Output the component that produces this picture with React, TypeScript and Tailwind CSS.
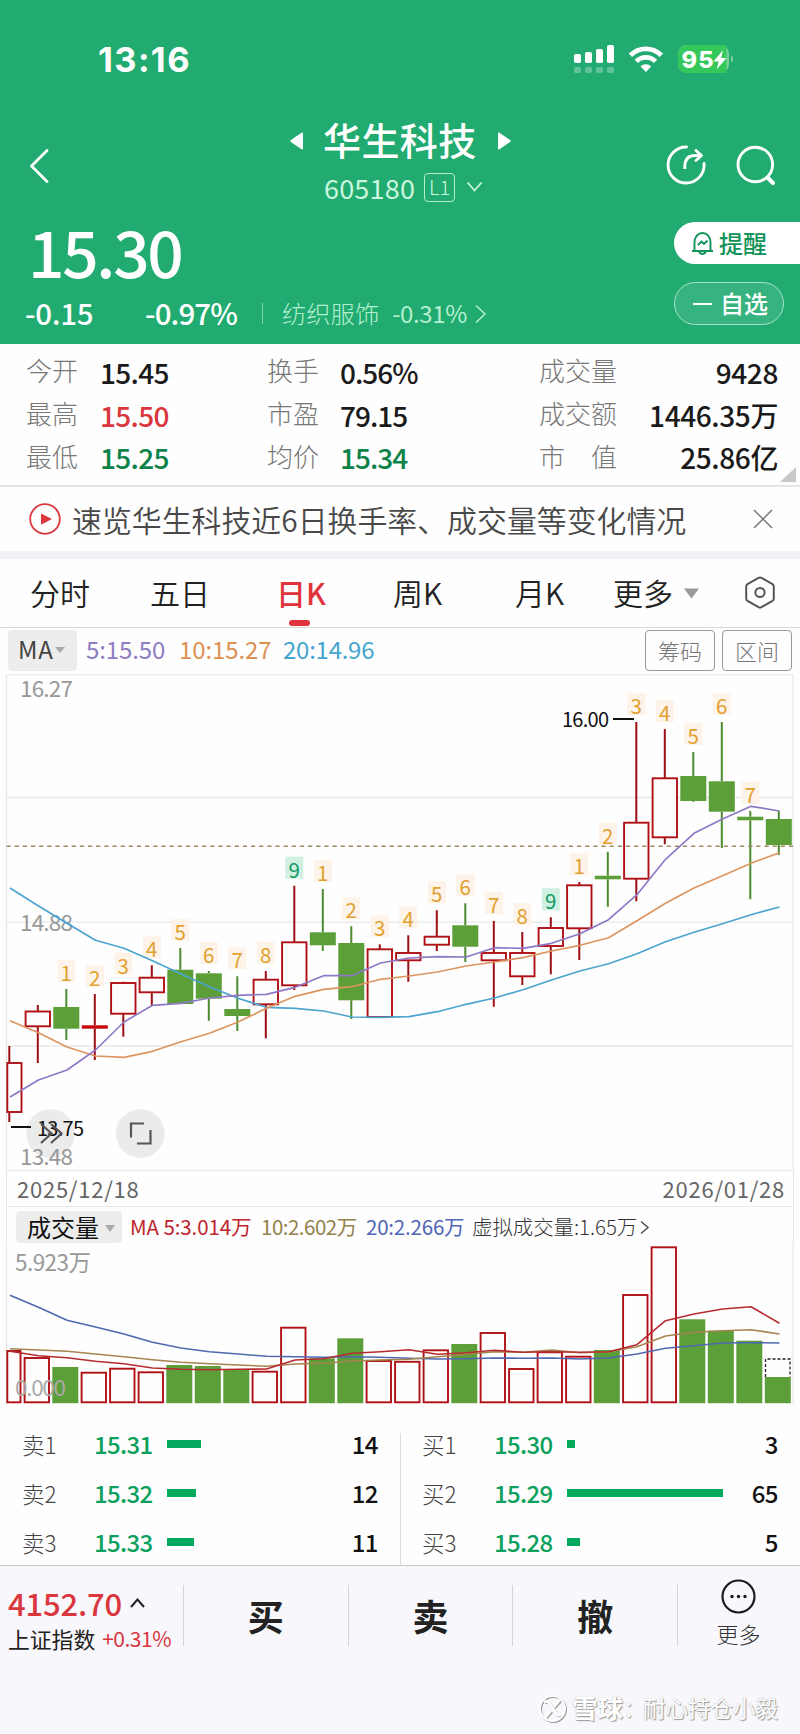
import React from "react";

type Candle = { o: number; c: number; h: number; l: number; up: boolean; tag?: string };

const STEP = 28.5;
const PRICE_TOP = 674;
const VOL_TOP = 1244;

// Body top, body bottom, wick top, wick bottom, rising flag, sequence mark
const rows: [number, number, number, number, number, string][] = [
  [1063, 1112, 1046, 1122, 1, ""],
  [1011.5, 1026.3, 1005, 1063, 1, ""],
  [1007, 1028.7, 989, 1040, 0, "1"],
  [1025.3, 1028.7, 994, 1060, 1, "2"],
  [983, 1013.7, 981.7, 1036.7, 1, "3"],
  [977.7, 992.3, 965.3, 1005.7, 1, "4"],
  [969.7, 1004, 948, 1004, 0, "5"],
  [973.3, 998.7, 971, 1020.7, 0, "6"],
  [1009, 1016, 976.3, 1031, 0, "7"],
  [979.7, 1004.3, 971, 1038.3, 1, "8"],
  [942.3, 985.3, 885.7, 990, 1, "9"],
  [932.3, 945.3, 889, 951, 0, "1"],
  [943, 1000.3, 926.3, 1019, 0, "2"],
  [949.3, 1017, 944.3, 1017, 1, "3"],
  [953, 960.3, 935.3, 981.7, 1, "4"],
  [936.7, 944.7, 910.3, 951, 1, "5"],
  [925.3, 946.7, 903.3, 962, 0, "6"],
  [953, 960.3, 921, 1006.7, 1, "7"],
  [953, 976.3, 932, 985, 1, "8"],
  [928, 946, 917.3, 974.3, 1, "9"],
  [885.3, 928.3, 882, 960, 1, "1"],
  [875.7, 879.3, 851.7, 906.7, 0, "2"],
  [822.7, 878.7, 722, 901.3, 1, "3"],
  [778.3, 837.3, 729, 844.3, 1, "4"],
  [776, 801, 752, 801.7, 0, "5"],
  [781.3, 811.7, 722, 848, 0, "6"],
  [816.7, 820.3, 811, 899.3, 0, "7"],
  [819, 845, 811, 855, 0, ""],
];
const candles: Candle[] = rows.map(([o, c, h, l, up, tag]) => ({ o, c, h, l, up: up === 1, tag }));

const ma5 = [1097, 1080, 1070, 1050, 1022, 1005.3, 1003.3, 998, 995.3, 994.3, 987.3, 975.7, 975.7, 963, 958, 956.7, 957, 947.7, 948.3, 943.3, 933.7, 919.7, 894.7, 859.3, 833.3, 819, 806.3, 811];
const ma10 = [1020.7, 1032.7, 1047, 1056, 1057.3, 1051.3, 1041.7, 1033.3, 1022, 1008.3, 996.3, 989.3, 986.7, 979.3, 976, 972, 966, 962, 957.7, 951, 945.3, 937.7, 920.7, 903.3, 888, 875.7, 863.3, 852.7];
const ma20 = [888, 906, 923.3, 940.3, 948.3, 960.7, 974, 986.7, 998.3, 1007.3, 1008.3, 1011, 1017, 1017.3, 1016.7, 1011.7, 1004.3, 998, 989.7, 980, 971, 963.7, 953.7, 941.7, 932.3, 923.7, 914.7, 907];

// Top of each volume bar
const volTops = [1351, 1358, 1367, 1372.7, 1368.7, 1372.3, 1365, 1366, 1369.7, 1371.7, 1327.7, 1358.3, 1338.3, 1361, 1361.8, 1350.3, 1344, 1333, 1369, 1352.3, 1356.7, 1350, 1295, 1247.3, 1319.3, 1330.7, 1340.7, 1377];
const v5 = [1351.3, 1355.7, 1357.7, 1361.3, 1363.7, 1368, 1369.3, 1369.7, 1369.3, 1369, 1360, 1358.7, 1353.3, 1351.7, 1349.7, 1354.3, 1352.7, 1350.3, 1352.3, 1351.7, 1352.3, 1351.7, 1344.7, 1320.7, 1314, 1309, 1306.7, 1323.3];
const v10 = [1348.7, 1350, 1351.3, 1354, 1356.7, 1359.7, 1362.3, 1363.7, 1365, 1366.3, 1364, 1363.3, 1361, 1360, 1359.3, 1356.7, 1354.3, 1351.7, 1352.3, 1350, 1352.7, 1351.7, 1346.7, 1336, 1332.3, 1330.7, 1329.7, 1334];
const v20 = [1295.3, 1307.3, 1320.3, 1327, 1334, 1342.3, 1348, 1351.7, 1354, 1356.3, 1356.7, 1357.3, 1356.7, 1357.3, 1358.3, 1359, 1358.7, 1358, 1358.3, 1358, 1359, 1358, 1354, 1348.3, 1345.7, 1343, 1342.7, 1343];

const line = (ys: number[]) => ys.map((y, i) => `${(10 + STEP * i).toFixed(1)},${y}`).join(" ");

function Header() {
  return (
    <header className="h-[344px] bg-[#21ab70] text-white">
      <div className="flex h-[118px] items-center pl-[98px] pr-[66px]">
        <span className="pt-[2px] font-['Inter'] text-[34.5px] font-bold leading-none tracking-[1.4px]">13:16</span>
        <svg className="ml-auto" width="161" height="30" viewBox="573 44 161 30">
          <g fill="#fff">
            <rect x="574" y="54" width="7" height="9" rx="1.8" />
            <rect x="585" y="52" width="7" height="11" rx="1.8" />
            <rect x="596" y="49" width="7" height="14" rx="1.8" />
            <rect x="607" y="45" width="7" height="18" rx="1.8" />
          </g>
          <g fill="#fff" opacity="0.28">
            <rect x="574" y="67" width="7" height="6" rx="1.8" />
            <rect x="585" y="67" width="7" height="6" rx="1.8" />
            <rect x="596" y="67" width="7" height="6" rx="1.8" />
            <rect x="607" y="67" width="7" height="6" rx="1.8" />
          </g>
          <g fill="none" stroke="#fff" strokeWidth="4.8">
            <path d="M630.4 55.2a22 22 0 0 1 31 0" />
            <path d="M636.3 61.4a13.6 13.6 0 0 1 19.2 0" />
          </g>
          <path d="M645.9 72l-5.300-5.600a7.600 7.600 0 0 1 10.600 0z" fill="#fff" />
          <rect x="678" y="45" width="51" height="28" rx="8.5" fill="#7bd09a" />
          <path d="M686.500 45h40v28h-40a8.500 8.500 0 0 1-8.500-8.500v-11a8.500 8.500 0 0 1 8.500-8.500z" fill="#34c759" />
          <path d="M731 55.500c3 1 3 6 0 7z" fill="#7bd09a" />
          <text x="681.5" y="68" fontFamily="Inter" fontWeight="800" fontSize="23.5" textLength="32" fill="#fff">95</text>
          <path d="M723 50l-9.500 11.500h5.200l-2 8L726.500 58h-5.300z" fill="#fff" />
        </svg>
      </div>

      <div className="flex h-[98px] items-center">
        <svg className="mb-[3px] ml-[29px]" width="20" height="34" viewBox="0 0 20 34">
          <path d="M18 1.500L2.500 17L18 32.500" fill="none" stroke="#fff" strokeWidth="2.8" strokeLinecap="round" strokeLinejoin="round" />
        </svg>
        <div className="ml-[241px] w-[222px]">
          <div className="flex h-[40px] items-center">
            <svg className="mt-[5px] shrink-0" width="13" height="18" viewBox="0 0 13 18">
              <path d="M11.500 0.800Q13 0 13 1.500V16.500Q13 18 11.500 17.200L0.600 9.800Q0 9 .6 8.200z" fill="#fff" />
            </svg>
            <h1 className="ml-[20px] whitespace-nowrap pt-[2px] text-[38px] font-medium leading-none tracking-[0.4px]">华生科技</h1>
            <svg className="ml-[21px] mt-[5px] shrink-0" width="13" height="18" viewBox="0 0 13 18">
              <path d="M1.500 0.800Q0 0 0 1.500V16.500Q0 18 1.500 17.200L12.400 9.800Q13 9 12.400 8.200z" fill="#fff" />
            </svg>
          </div>
          <div className="flex h-[58px] items-center pl-[34px] text-[#ccf7df]">
            <span className="text-[27px] leading-none tracking-[0.2px]">605180</span>
            <span className="ml-[9px] flex h-[29px] w-[31px] items-center justify-center rounded-[4px] border border-[#b5ecd0] pb-px text-[20px] font-light leading-none">L1</span>
            <svg className="ml-[11px]" width="17" height="12" viewBox="0 0 17 12">
              <path d="M1.500 1.500L8.500 9.500L15.500 1.500" fill="none" stroke="#ccf7df" strokeWidth="1.8" />
            </svg>
          </div>
        </div>
        <div className="mb-[4px] ml-auto flex items-center gap-[30px] pr-[25px]">
          <svg width="40" height="40" viewBox="0 0 40 40" fill="none" stroke="#fff" strokeWidth="2.9">
            <path d="M20.500 2A18 18 0 1 0 38 18.500" strokeLinecap="round" />
            <path d="M18.800 24V20.500Q19.500 10.500 29 10.500H34" />
            <path d="M30 5.500L35.500 10.500L30 15.500" strokeLinecap="round" strokeLinejoin="round" />
          </svg>
          <svg width="39" height="40" viewBox="0 0 39 40" fill="none" stroke="#fff" strokeWidth="2.9">
            <circle cx="19.3" cy="19.5" r="17.3" />
            <path d="M31.500 32.500L37 38" strokeWidth="4" strokeLinecap="round" />
          </svg>
        </div>
      </div>

      <div className="flex h-[128px] justify-between">
        <div>
          <div className="flex h-[68px] items-center pl-[28px] text-[64px] font-medium leading-none tracking-[-2.3px]">15.30</div>
          <div className="flex h-[58px] items-center pl-[25px] leading-none">
            <span className="w-[120px] text-[29.5px] font-medium tracking-[-0.3px]">-0.15</span>
            <span className="w-[117px] text-[29.5px] font-medium tracking-[-0.9px]">-0.97%</span>
            <span className="h-[21px] w-px bg-[#7fd6ac]" />
            <span className="ml-[19px] text-[24.3px] font-light text-[#b4f0d0]">纺织服饰</span>
            <span className="ml-[13px] text-[24px] tracking-[-0.4px] text-[#b4f0d0]">-0.31%</span>
            <svg className="ml-[8px] mt-[1px]" width="12" height="20" viewBox="0 0 12 20">
              <path d="M1 1.500L10 10L1 18.500" fill="none" stroke="#b4f0d0" strokeWidth="1.5" />
            </svg>
          </div>
        </div>
        <div className="flex w-[126px] flex-col gap-[18px] pt-[6px]">
          <div className="flex h-[42px] w-[126px] items-center rounded-l-full bg-white pl-[17px] text-[#12935a]">
            <svg width="23" height="25" viewBox="0 0 23 25" fill="none" stroke="#12935a" strokeWidth="1.9">
              <path d="M1 20H22M3.500 20V11a8 9 0 0 1 16 0v9M8 21q3.500 4 7 0" />
              <path d="M7 14l3.500-3.500 2.500 2.500 3.500-3.500" />
            </svg>
            <span className="ml-[5px] pb-[1px] text-[24px] font-medium leading-none">提醒</span>
          </div>
          <div className="flex h-[43px] w-[110px] items-center rounded-full border border-[#a5e6c6] bg-[#37b37f] pl-[18px]">
            <span className="h-[2px] w-[19px] bg-white" />
            <span className="ml-[8px] pb-[2px] text-[24px] font-medium leading-none">自选</span>
          </div>
        </div>
      </div>
    </header>
  );
}

const stats: { a: string; av: string; ac: string; b: string; bv: string; bc: string; c: string; cv: string }[] = [
  { a: "今开", av: "15.45", ac: "text-[#1a1a1a]", b: "换手", bv: "0.56%", bc: "text-[#1a1a1a]", c: "成交量", cv: "9428" },
  { a: "最高", av: "15.50", ac: "text-[#d9363e]", b: "市盈", bv: "79.15", bc: "text-[#1a1a1a]", c: "成交额", cv: "1446.35万" },
  { a: "最低", av: "15.25", ac: "text-[#0c8348]", b: "均价", bv: "15.34", bc: "text-[#0c8348]", c: "市　值", cv: "25.86亿" },
];

function Stats() {
  return (
    <section className="relative h-[143px] border-b-2 border-[#e6e6ea] pt-[5px] leading-none">
      {stats.map((s) => (
        <div key={s.a} className="flex h-[42.7px] items-center pl-[26px] pr-[22px]">
          <span className="w-[74px] text-[26px] font-light text-[#777]">{s.a}</span>
          <span className={`w-[167px] pt-[3px] text-[28px] font-medium tracking-[-0.7px] ${s.ac}`}>{s.av}</span>
          <span className="w-[73px] text-[26px] font-light text-[#777]">{s.b}</span>
          <span className={`w-[199px] pt-[3px] text-[28px] font-medium tracking-[-1px] ${s.bc}`}>{s.bv}</span>
          <span className="whitespace-nowrap text-[26px] font-light text-[#777]">{s.c}</span>
          <span className="ml-auto pt-[3px] text-[28px] font-medium tracking-[-0.4px] text-[#1a1a1a]">{s.cv}</span>
        </div>
      ))}
      <svg className="absolute bottom-[3px] right-[4px]" width="16" height="15" viewBox="0 0 16 15">
        <path d="M16 0V15H0z" fill="#c8c8c8" />
      </svg>
    </section>
  );
}

function News() {
  return (
    <section className="flex h-[64px] items-center pl-[29px] pr-[27px]">
      <svg width="32" height="32" viewBox="0 0 32 32">
        <circle cx="16" cy="16" r="14.8" fill="none" stroke="#d9363e" strokeWidth="1.8" />
        <path d="M12 10.500L23 16L12 21.800z" fill="#d9363e" />
      </svg>
      <span className="ml-[11px] pt-[1px] text-[29.9px] font-[350] leading-none text-[#484848]">速览华生科技近6日换手率、成交量等变化情况</span>
      <svg className="ml-auto" width="20" height="20" viewBox="0 0 20 20">
        <path d="M1 1L19 19M19 1L1 19" stroke="#777" strokeWidth="1.5" />
      </svg>
    </section>
  );
}

function Tabs() {
  return (
    <nav className="flex h-[69px] items-center border-b border-[#d9d9dc] text-[30px] font-[350] leading-none text-[#222]">
      <span className="mb-[2px] ml-[30px] w-[120px]">分时</span>
      <span className="mb-[2px] w-[126px]">五日</span>
      <span className="relative mb-[2px] w-[117px] font-medium text-[#e0333d]">
        日K
        <span className="absolute left-[13px] top-[43px] h-[6px] w-[21px] rounded-full bg-[#e0333d]" />
      </span>
      <span className="mb-[2px] w-[122px]">周K</span>
      <span className="mb-[2px] w-[98px]">月K</span>
      <span className="mb-[2px]">更多</span>
      <svg className="ml-[11px]" width="15" height="11" viewBox="0 0 15 11">
        <path d="M0 .5H15L7.500 10.500z" fill="#999" />
      </svg>
      <svg className="ml-[45px] mt-[-2px]" width="32" height="33" viewBox="0 0 32 33" fill="none" stroke="#555" strokeWidth="2">
        <path d="M14.500 1.900Q16 1.100 17.500 1.900L28.500 8.100Q29.800 9 29.800 10.500V22.500Q29.800 24 28.500 24.900L17.500 31.100Q16 31.900 14.500 31.100L3.500 24.900Q2.200 24 2.200 22.500V10.500Q2.200 9 3.500 8.100z" />
        <circle cx="16" cy="16.5" r="4.6" />
      </svg>
    </nav>
  );
}

function MaRow() {
  return (
    <div className="flex h-[46px] items-start px-[8px] pt-[2px] leading-none">
      <div className="flex h-[41px] w-[69px] items-center rounded-[4px] bg-[#ededed] pl-[10px] text-[24px] text-[#444]">
        <span className="mb-[3px] tracking-[0.8px]">MA</span>
        <svg className="ml-[1px] mb-[2px]" width="10" height="6" viewBox="0 0 10 6">
          <path d="M0 0H10L5 6z" fill="#aaa" />
        </svg>
      </div>
      <div className="flex h-[38px] items-center text-[24px] tracking-[-0.1px]">
        <span className="ml-[9px] w-[93px] text-[#8f7cc4]">5:15.50</span>
        <span className="w-[104px] text-[#dc9152]">10:15.27</span>
        <span className="tracking-[-0.25px] text-[#44a5cf]">20:14.96</span>
      </div>
      <div className="ml-auto flex gap-[7px] text-[22px] font-light text-[#777]">
        <span className="flex h-[41px] w-[70px] items-center justify-center rounded-[4px] border border-[#999] pb-[2px]">筹码</span>
        <span className="flex h-[41px] w-[70px] items-center justify-center rounded-[4px] border border-[#999] pb-[2px]">区间</span>
      </div>
    </div>
  );
}

const RED = "#b01015";
const GREEN = "#5c9f38";

function PriceChart() {
  return (
    <svg className="block" width="800" height="497" viewBox={`0 ${PRICE_TOP} 800 497`} fontFamily="'Noto Sans CJK SC', sans-serif">
      <g stroke="#e8e8e8" strokeWidth="1.3">
        <path d="M6.500 674.500H793M6.500 797.500H793M6.500 922.200H793M6.500 1046H793M6.500 1170.500H793" />
        <path d="M6.500 674V1171M793 674V1171" />
      </g>
      <g fill="#ebebeb">
        <circle cx="50.5" cy="1133.500" r="24.300" />
        <circle cx="140.3" cy="1133.500" r="24.300" />
      </g>
      <g fontSize="22.5" fill="#999">
        <text x="20" y="697" textLength="53">16.27</text>
        <text x="20" y="931" textLength="53">14.88</text>
        <text x="20" y="1165" textLength="53">13.48</text>
      </g>
      {candles.map((k, i) => {
        if (!k.tag) return null;
        const x = 9.3 + STEP * i;
        const nine = k.tag === "9";
        return (
          <g key={i}>
            <rect x={x - 9} y={k.h - 29} width="18" height="22" fill={nine ? "#d0f0e2" : "#fdf3e9"} />
            <text x={x} y={k.h - 8} textAnchor="middle" fontSize="20.5" fill={nine ? "#149a62" : "#e2a12f"}>{k.tag}</text>
          </g>
        );
      })}
      {candles.map((k, i) => {
        const x = 9.3 + STEP * i;
        const color = k.up ? RED : GREEN;
        const left = i === 0 ? 6.5 : x - 13;
        const thin = k.c - k.o < 5;
        return (
          <g key={i}>
            <path d={`M${x} ${k.h}V${k.o}M${x} ${k.c}V${k.l}`} stroke={k.up ? "#9c1014" : "#4d8a30"} strokeWidth="2" />
            {k.up && !thin ? (
              <rect x={left + 0.8} y={k.o} width={x + 13 - left - 1.6} height={k.c - k.o} fill="#fdfdfd" stroke={color} strokeWidth="1.9" />
            ) : (
              <rect x={left} y={k.o} width={x + 13 - left} height={k.c - k.o} fill={k.up ? "#c8060c" : color} />
            )}
          </g>
        );
      })}
      <path d="M6.500 846.300H793" stroke="#9c8c60" strokeWidth="1.5" strokeDasharray="4.2 3.95" />
      <g fill="none" strokeWidth="1.7" strokeLinejoin="round">
        <polyline points={line(ma20)} stroke="#4ba3cf" />
        <polyline points={line(ma10)} stroke="#dd9560" />
        <polyline points={line(ma5)} stroke="#8f79c6" />
      </g>
      <path d="M11 1127H31M613 719H634" stroke="#111" strokeWidth="1.8" />
      <g fontSize="20" fill="#111">
        <text x="37" y="1135.500" textLength="47">13.75</text>
        <text x="562" y="726.500" textLength="47">16.00</text>
      </g>
      <g fill="none" stroke="#555" strokeWidth="2.2">
        <path d="M41 1124l10.500 9.500L41 1143M51 1124l10.500 9.500L51 1143" />
        <path d="M144 1123.500H131V1137.500M150.500 1130V1143.500H137" />
      </g>
    </svg>
  );
}

function VolumeChart() {
  return (
    <svg className="block" width="800" height="160" viewBox={`0 ${VOL_TOP} 800 160`} fontFamily="'Noto Sans CJK SC', sans-serif">
      <path d="M6.500 1244V1404M793 1244V1404" stroke="#e8e8e8" strokeWidth="1.3" />
      {candles.map((k, i) => {
        const x = 8.3 + STEP * i;
        const left = i === 0 ? 6.5 : x - 13;
        const top = volTops[i];
        return k.up ? (
          <rect key={i} x={left + 0.8} y={top} width={x + 13 - left - 1.6} height={1402.3 - top} fill="none" stroke={RED} strokeWidth="1.9" />
        ) : (
          <rect key={i} x={left} y={top} width={26} height={1403.2 - top} fill={GREEN} />
        );
      })}
      <path d="M765.500 1377V1359H790V1377" fill="none" stroke="#222" strokeWidth="1.3" strokeDasharray="3 2" />
      <g fontSize="22.5" fill="#999">
        <text x="15" y="1271.300" textLength="76">5.923万</text>
        <text x="15" y="1396.300" textLength="51" fill="#aaa">0.000</text>
      </g>
      <g fill="none" strokeWidth="1.6" strokeLinejoin="round">
        <polyline points={line(v20)} stroke="#5068b0" />
        <polyline points={line(v10)} stroke="#a58450" />
        <polyline points={line(v5)} stroke="#b52c30" />
      </g>
    </svg>
  );
}

function Volume() {
  return (
    <section>
      <div className="mx-[6px] flex h-[36px] items-center justify-between border-x border-b border-[#e8e8e8] pb-[1px] pl-[10px] pr-[8px] text-[22px] leading-none tracking-[0.75px] text-[#666]">
        <span>2025/12/18</span>
        <span>2026/01/28</span>
      </div>
      <div className="mx-[6px] flex h-[37px] items-center whitespace-nowrap border-x border-[#e8e8e8] pl-[9px] leading-none">
        <div className="mt-[3px] flex h-[32px] w-[106px] items-center rounded-[4px] bg-[#ededed] pb-[1px] pl-[11px] text-[24px] text-[#111]">
          <span>成交量</span>
          <svg className="ml-[6px] mt-[3px]" width="10" height="7" viewBox="0 0 10 7">
            <path d="M0 0H10L5 7z" fill="#aaa" />
          </svg>
        </div>
        <span className="ml-[8px] mt-[2px] w-[131px] text-[20.5px] tracking-[-0.1px] text-[#c0252c]">MA 5:3.014万</span>
        <span className="mt-[2px] w-[105px] text-[20.5px] tracking-[-0.5px] text-[#93804a]">10:2.602万</span>
        <span className="mt-[2px] w-[106px] text-[20.5px] tracking-[-0.2px] text-[#4f65b5]">20:2.266万</span>
        <span className="mt-[2px] text-[20.4px] font-light text-[#333]">虚拟成交量:1.65万</span>
        <svg className="ml-[3px] mt-[3px]" width="10" height="15" viewBox="0 0 10 15">
          <path d="M1 1.500L8 7.500L1 13.500" fill="none" stroke="#444" strokeWidth="1.4" />
        </svg>
      </div>
      <VolumeChart />
    </section>
  );
}

const asks = [
  { n: "卖1", p: "15.31", w: 34, q: "14" },
  { n: "卖2", p: "15.32", w: 29, q: "12" },
  { n: "卖3", p: "15.33", w: 26.5, q: "11" },
];
const bids = [
  { n: "买1", p: "15.30", w: 8, q: "3" },
  { n: "买2", p: "15.29", w: 156, q: "65" },
  { n: "买3", p: "15.28", w: 12.5, q: "5" },
];

function Book({ data }: { data: typeof asks }) {
  return (
    <div className="w-[400px]">
      {data.map((r) => (
        <div key={r.n} className="flex h-[48.8px] items-center pl-[22px] pr-[22px] leading-none">
          <span className="w-[72px] text-[22.5px] font-light text-[#444]">{r.n}</span>
          <span className="w-[73px] text-[24px] font-medium tracking-[-0.7px] text-[#0ba15c]">{r.p}</span>
          <span className="h-[8px] bg-[#03a95c]" style={{ width: r.w }} />
          <span className="ml-auto text-[24px] font-medium tracking-[-0.5px] text-[#111]">{r.q}</span>
        </div>
      ))}
    </div>
  );
}

function OrderBook() {
  return (
    <section className="flex h-[162px] overflow-hidden border-b border-[#c9c9cc] pt-[16px]">
      <Book data={asks} />
      <span className="mt-[13px] w-px shrink-0 bg-[#dcdcdc]" />
      <div className="-ml-px">
        <Book data={bids} />
      </div>
    </section>
  );
}

function Footer() {
  return (
    <footer className="h-[168px] bg-[#f8f8fc] leading-none">
      <div className="flex h-[100px]">
        <div className="w-[183px] pl-[8px] pt-[21px]">
          <div className="flex items-center">
            <span className="text-[31px] font-medium tracking-[-0.2px] text-[#d9363e]">4152.70</span>
            <svg className="ml-[8px]" width="15" height="10" viewBox="0 0 15 10">
              <path d="M1 9L7.500 1.500L14 9" fill="none" stroke="#222" strokeWidth="2" />
            </svg>
          </div>
          <div className="mt-[10px] flex items-center whitespace-nowrap">
            <span className="text-[21.8px] text-[#222]">上证指数</span>
            <span className="ml-[7px] text-[21px] tracking-[-0.5px] text-[#d9363e]">+0.31%</span>
          </div>
        </div>
        {["买", "卖", "撤"].map((t) => (
          <div key={t} className="mt-[19px] flex h-[61px] w-[164.7px] items-center justify-center border-l border-[#d4d4d8] pb-[2px] text-[36px] font-bold text-[#222]">
            {t}
          </div>
        ))}
        <div className="mt-[19px] h-[61px] w-px bg-[#d4d4d8]" />
        <div className="flex w-[121px] flex-col items-center pt-[13px]">
          <svg width="35" height="35" viewBox="0 0 35 35">
            <circle cx="17.5" cy="17.5" r="16" fill="none" stroke="#1a1a1a" strokeWidth="2.2" />
            <circle cx="11" cy="17.5" r="1.7" fill="#1a1a1a" />
            <circle cx="17.5" cy="17.5" r="1.7" fill="#1a1a1a" />
            <circle cx="24" cy="17.5" r="1.7" fill="#1a1a1a" />
          </svg>
          <span className="mt-[8px] text-[22px] font-light text-[#333]">更多</span>
        </div>
      </div>
      <div className="flex h-[82px] items-center justify-end whitespace-nowrap pr-[22px] text-[22.5px] text-white [text-shadow:1px_1px_1px_#999,0_0_1px_#aaa]">
        <svg className="mr-[5px] mt-[2px] drop-shadow-[1px_1px_0.5px_#999]" width="29" height="29" viewBox="0 0 29 29" fill="none" stroke="#fff" strokeWidth="2">
          <circle cx="14.5" cy="14.5" r="12.5" />
          <path d="M6 8q3-2 6 2l5 8q3 5 7 2M22 6L16 13M13 17L7 24" strokeWidth="2.5" />
        </svg>
        <span className="text-[25.5px] font-bold">雪球</span>
        <span className="w-[20px]">：</span>
        <span>耐心持仓小毅</span>
      </div>
    </footer>
  );
}

export default function App() {
  return (
    <main className="h-[1734px] w-[800px] overflow-hidden bg-[#fefefe] font-['Noto_Sans_CJK_SC',sans-serif]">
      <Header />
      <Stats />
      <News />
      <div className="h-[8px] bg-[#f1f1f7]" />
      <Tabs />
      <MaRow />
      <PriceChart />
      <Volume />
      <OrderBook />
      <Footer />
    </main>
  );
}
